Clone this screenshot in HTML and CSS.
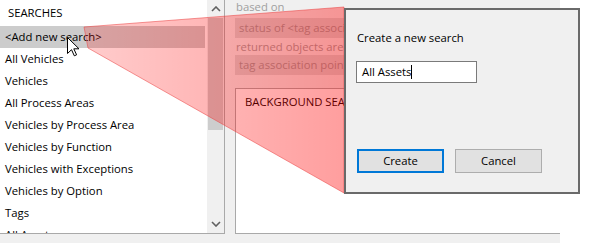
FILE: index.html
```html
<!DOCTYPE html>
<html>
<head>
<meta charset="utf-8">
<link rel="stylesheet" href="styles.css">
</head>
<body>
<div class="app">
  <div class="list">
    <div class="list-body">
      <div class="list-head">SEARCHES</div>
      <div class="row sel">&lt;Add new search&gt;</div>
      <div class="row">All Vehicles</div>
      <div class="row">Vehicles</div>
      <div class="row">All Process Areas</div>
      <div class="row">Vehicles by Process Area</div>
      <div class="row">Vehicles by Function</div>
      <div class="row">Vehicles with Exceptions</div>
      <div class="row">Vehicles by Option</div>
      <div class="row">Tags</div>
      <div class="row">All Assets</div>
    </div>
    <div class="vscroll">
      <div class="arrow">
        <svg width="10" height="6" viewBox="0 0 10 6"><path d="M1 5 L5 1 L9 5" fill="none" stroke="#606060" stroke-width="1.6"/></svg>
      </div>
      <div class="track"><div class="thumb"></div></div>
      <div class="arrow">
        <svg width="10" height="6" viewBox="0 0 10 6"><path d="M1 1 L5 5 L9 1" fill="none" stroke="#606060" stroke-width="1.6"/></svg>
      </div>
    </div>
  </div>
  <div class="detail">
    <div class="caption">based on</div>
    <div class="field">status of &lt;tag association&gt; is Active</div>
    <div class="caption">returned objects are</div>
    <div class="field">tag association points to the asset</div>
    <div class="bg-box">
      <div class="bg-title">BACKGROUND SEARCH</div>
    </div>
  </div>
</div>

<svg class="wedge" width="590" height="243" viewBox="0 0 590 243">
  <defs>
    <linearGradient id="wg" x1="84" y1="0" x2="344" y2="0" gradientUnits="userSpaceOnUse">
      <stop offset="0" stop-color="#ff0000" stop-opacity="0.2"/>
      <stop offset="1" stop-color="#ff0000" stop-opacity="0.38"/>
    </linearGradient>
  </defs>
  <polygon points="84,27 344,7 344,193 88,48" fill="url(#wg)" stroke="rgba(235,70,70,0.55)" stroke-width="1"/>
</svg>

<svg class="cursor" width="14" height="21" viewBox="0 0 14 21">
  <path d="M0.5 0.5 L0.5 16.5 L4.5 12.7 L7.3 18.8 L9.6 17.8 L6.8 11.8 L12 11.8 Z" fill="#fff" stroke="#000" stroke-width="1" stroke-linejoin="miter"/>
</svg>

<div class="dialog">
  <div class="dlg-label">Create a new search</div>
  <div class="dlg-input"><span>All Assets</span><span class="caret"></span></div>
  <div class="dlg-buttons">
    <div class="btn default">Create</div>
    <div class="btn">Cancel</div>
  </div>
</div>
</body>
</html>
```

FILE: styles.css
```css
* { box-sizing: border-box; }
html, body {
  margin: 0;
  padding: 0;
}
body {
  width: 590px;
  height: 243px;
  background: #ffffff;
  overflow: hidden;
  position: relative;
  font-family: "Open Sans", "Noto Sans", sans-serif;
  font-size: 11.3px;
  color: #000;
}
.app {
  width: 560px;
  height: 243px;
  background: #f0f0f0;
  display: flex;
  align-items: flex-start;
}
.list {
  width: 225px;
  height: 234px;
  background: #fff;
  border-right: 1px solid #a9a9a9;
  border-bottom: 1px solid #a9a9a9;
  display: flex;
  overflow: hidden;
}
.list-body {
  width: 207px;
  height: 233px;
  overflow: hidden;
}
.list-head {
  height: 26px;
  line-height: 26px;
  padding-left: 8px;
}
.row {
  height: 22px;
  line-height: 22px;
  padding-left: 5px;
  width: 205px;
  white-space: nowrap;
}
.row.sel { background: #cccccc; }
.vscroll {
  width: 17px;
  height: 233px;
  background: #f0f0f0;
  display: flex;
  flex-direction: column;
}
.arrow {
  height: 18px;
  display: flex;
  align-items: center;
  justify-content: center;
}
.track {
  flex: 1;
  padding: 0 1px;
}
.thumb {
  height: 112px;
  background: #cdcdcd;
}
.detail {
  margin-left: 10px;
  flex: 1;
  display: flex;
  flex-direction: column;
}
.caption {
  color: #a0a0a0;
  padding-left: 1px;
  height: 17px;
  line-height: 14px;
  white-space: nowrap;
}
.caption:first-child { height: 18px; }
.field {
  height: 20px;
  line-height: 20px;
  background: #d6d6d6;
  color: #9a9a9a;
  padding-left: 4px;
  width: 109px;
  overflow: hidden;
  white-space: nowrap;
}
.field + .caption { margin-top: 0; height: 17px; line-height: 18px; width: 109px; overflow: hidden; }
.bg-box {
  margin-top: 13px;
  height: 146px;
  background: #fff;
  border-top: 1px solid #a9a9a9;
  border-left: 1px solid #a9a9a9;
  border-bottom: 1px solid #a9a9a9;
  padding-left: 9px;
}
.bg-title {
  margin-top: 5px;
  line-height: 16px;
  white-space: nowrap;
}
.wedge {
  position: absolute;
  left: 0;
  top: 0;
}
.cursor {
  position: absolute;
  left: 67px;
  top: 37px;
}
.dialog {
  position: absolute;
  left: 344px;
  top: 8px;
  width: 236px;
  height: 186px;
  background: #f0f0f0;
  border: 2px solid #6a6a6a;
  padding: 20px 0 0 11px;
}
.dlg-label {
  line-height: 16px;
  white-space: nowrap;
}
.dlg-input {
  margin-top: 15px;
  margin-left: -1px;
  width: 121px;
  height: 22px;
  background: #fff;
  border: 1px solid #7a7a7a;
  padding-left: 5px;
  line-height: 20px;
  display: flex;
  align-items: center;
}
.caret {
  display: inline-block;
  width: 1px;
  height: 14px;
  background: #000;
}
.dlg-buttons {
  margin-top: 66px;
  display: flex;
  gap: 11px;
}
.btn {
  width: 87px;
  height: 24px;
  background: #e1e1e1;
  border: 1px solid #adadad;
  text-align: center;
  line-height: 22px;
}
.btn.default {
  border: 2px solid #0078d7;
  line-height: 20px;
}
```
